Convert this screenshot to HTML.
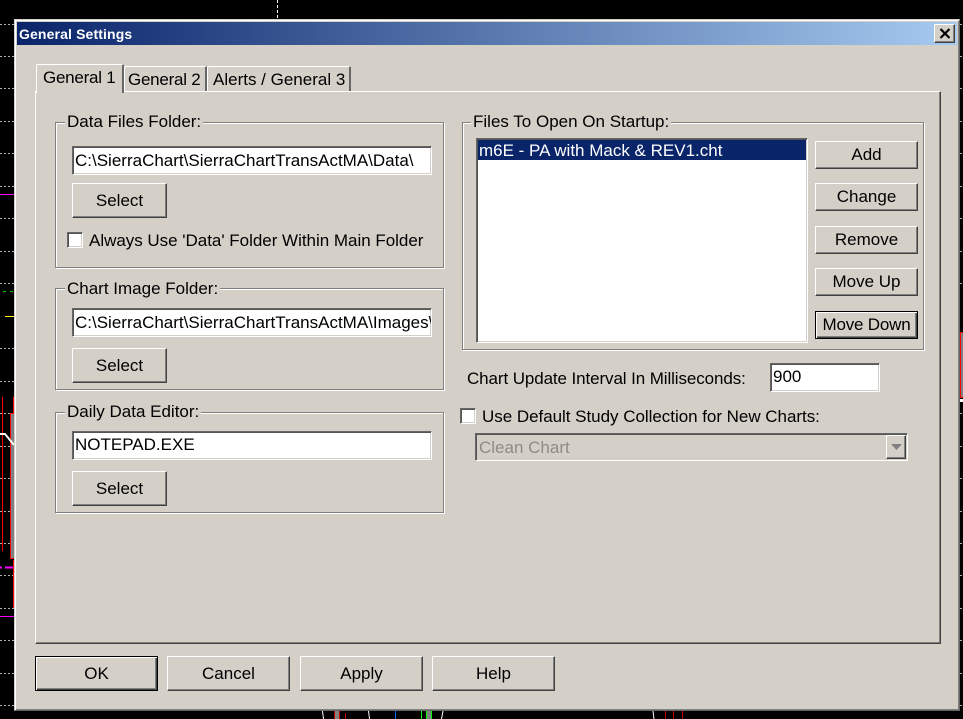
<!DOCTYPE html>
<html><head><meta charset="utf-8">
<style>
html,body{margin:0;padding:0;background:#000;width:963px;height:719px;overflow:hidden}
body{position:relative;font-family:"Liberation Sans",Arial,sans-serif;font-size:17px;color:#000}
div,span{position:absolute;box-sizing:border-box;white-space:pre}
.t{line-height:20px;height:20px}
.b{border:1px solid;border-color:#fff #404040 #404040 #fff;box-shadow:inset -1px -1px 0 #808080;background:#d4d0c8;text-align:center}
.d{border:1px solid #000;box-shadow:inset 1px 1px 0 #fff,inset -1px -1px 0 #404040,inset -2px -2px 0 #808080;background:#d4d0c8;text-align:center}
.e{background:#fff;border:1px solid;border-color:#666 #fff #fff #666;box-shadow:inset 1px 1px 0 #555,inset -1px -1px 0 #d4d0c8;padding-left:2px;overflow:hidden}
.g{border:1px solid #808080;box-shadow:1px 1px 0 #fff,inset 1px 1px 0 #fff}
.l{background:#d4d0c8;padding:0 2px 0 2px;line-height:20px;height:20px}
.c{background:#fff;border:1px solid;border-color:#666 #fff #fff #666;box-shadow:inset 1px 1px 0 #555,inset -1px -1px 0 #d4d0c8;width:16px;height:16px}
</style></head><body>
<svg width="963" height="719" style="position:absolute;left:0;top:0">
<g stroke="#b0b0b0" stroke-width="1" stroke-dasharray="2 2">
<path d="M0 24.5H14M0 56.5H14M0 88.5H14M0 121.5H14M0 153.5H14M0 186.5H14M0 218.5H14M0 251.5H14M0 283.5H14M0 348.5H14M0 381.5H14M0 413.5H14M0 446.5H14M0 478.5H14M0 511.5H14M0 543.5H14M0 575.5H14M0 608.5H14M0 640.5H14M0 673.5H14M0 705.5H14"/>
<path d="M960 24.5H963M960 56.5H963M960 88.5H963M960 121.5H963M960 153.5H963M960 186.5H963M960 218.5H963M960 251.5H963M960 283.5H963M960 413.5H963M960 446.5H963M960 478.5H963M960 511.5H963M960 543.5H963M960 575.5H963M960 608.5H963M960 640.5H963M960 673.5H963M960 705.5H963"/>
</g>
<path d="M277.5 0V18" stroke="#fff" stroke-dasharray="3 2"/>
<path d="M0 194.5H14M0 616.5H14" stroke="#f0f"/>
<path d="M0 567.5H2M5 567.5H14" stroke="#f0f" stroke-width="2"/>
<path d="M3 291.5H14" stroke="#0c0" stroke-dasharray="3 4"/>
<path d="M5 316.5H14" stroke="#ff0"/>
<path d="M2.5 397V551M13.5 397V414M13.5 560V608" stroke="#f00"/>
<rect x="10.500" y="413.500" width="4" height="145" fill="#808080" stroke="#f00"/>
<path d="M0 434H5L14 445" stroke="#fff" stroke-width="2" fill="none"/>
<rect x="960" y="332" width="3" height="66" fill="#808080"/>
<path d="M960 332.500H963M960.500 332V398M960 397.500H963" stroke="#f00"/>
<rect x="960" y="399" width="3" height="3" fill="#fff"/>
<g fill="none">
<path d="M322.500 711L323.500 719M368.500 711L369.500 719M443 711L441.500 719M653 711L654 719" stroke="#fff"/>
<rect x="335" y="711" width="5" height="8" fill="#808080" stroke="#f00" stroke-width="0"/>
<path d="M334.500 711V719M339.500 711V719M345.500 713V719M665.500 711V719M673.500 711V719M682.500 711V719" stroke="#c00"/>
<path d="M395.500 711V719" stroke="#06f"/>
<rect x="427" y="711" width="5" height="8" fill="#808080"/>
<path d="M421.500 711V719M426.500 711V719M431.500 711V719" stroke="#0f0"/>
</g>
</svg>

<!-- window -->
<div style="left:14px;top:19px;width:946px;height:692px;background:#d4d0c8;border:1px solid;border-color:#d4d0c8 #666 #666 #d4d0c8;box-shadow:inset 1px 1px 0 #fff,inset -1px -1px 0 #808080"></div>
<div style="left:17px;top:22px;width:940px;height:23px;background:linear-gradient(to right,#0a246a,#a6caf0)"></div>
<div style="left:19px;top:24px;height:20px;line-height:20px;color:#fff;font-weight:bold;font-size:14px;letter-spacing:.13px">General Settings</div>
<div class="b" style="left:934px;top:24px;width:21px;height:19px"></div>
<svg width="12" height="11" style="position:absolute;left:939px;top:28px"><path d="M1.500 1L10.500 10M10.500 1L1.500 10" stroke="#000" stroke-width="2.200"/></svg>

<!-- tab panel -->
<div style="left:35px;top:91px;width:906px;height:553px;border:1px solid;border-color:#fff #404040 #404040 #fff;box-shadow:inset -1px -1px 0 #808080"></div>
<div style="left:36px;top:64px;width:88px;height:29px;background:#d4d0c8;border-top:1px solid #fff;border-left:1px solid #fff;border-right:2px solid #666;border-radius:2px 2px 0 0"></div>
<div class="t" style="left:43px;top:68px;letter-spacing:-.25px">General 1</div>
<div style="left:124px;top:66px;width:83px;height:25px;border-top:1px solid #fff;border-left:1px solid #fff;border-right:2px solid #666;border-radius:2px 2px 0 0"></div>
<div class="t" style="left:128px;top:70px;letter-spacing:-.25px">General 2</div>
<div style="left:207px;top:66px;width:144px;height:25px;border-top:1px solid #fff;border-left:1px solid #fff;border-right:2px solid #666;border-radius:2px 2px 0 0"></div>
<div class="t" style="left:213px;top:70px">Alerts / General 3</div>

<!-- left groups -->
<div class="g" style="left:55px;top:122px;width:389px;height:146px"></div>
<div class="l" style="left:65px;top:112px">Data Files Folder:</div>
<div class="e t" style="left:72px;top:146px;width:360px;height:29px;line-height:28px">C:\SierraChart\SierraChartTransActMA\Data\</div>
<div class="b" style="left:72px;top:183px;width:95px;height:35px;line-height:34px">Select</div>
<div class="c" style="left:67px;top:232px"></div>
<div class="t" style="left:89px;top:231px;letter-spacing:-.02px">Always Use 'Data' Folder Within Main Folder</div>

<div class="g" style="left:55px;top:288px;width:389px;height:102px"></div>
<div class="l" style="left:65px;top:279px">Chart Image Folder:</div>
<div class="e t" style="left:72px;top:308px;width:360px;height:29px;line-height:28px">C:\SierraChart\SierraChartTransActMA\Images\</div>
<div class="b" style="left:72px;top:348px;width:95px;height:35px;line-height:34px">Select</div>

<div class="g" style="left:55px;top:412px;width:389px;height:101px"></div>
<div class="l" style="left:65px;top:402px">Daily Data Editor:</div>
<div class="e t" style="left:72px;top:431px;width:360px;height:29px;line-height:26px">NOTEPAD.EXE</div>
<div class="b" style="left:72px;top:471px;width:95px;height:35px;line-height:34px">Select</div>

<!-- right group -->
<div class="g" style="left:462px;top:122px;width:462px;height:228px"></div>
<div class="l" style="left:471px;top:112px">Files To Open On Startup:</div>
<div style="left:476px;top:138px;width:332px;height:205px;background:#fff;border:1px solid;border-color:#666 #fff #fff #666;box-shadow:inset 1px 1px 0 #555,inset -1px -1px 0 #d4d0c8"></div>
<div style="left:478px;top:140px;width:328px;height:20px;background:#0a246a;color:#fff;line-height:21px;padding-left:1px">m6E - PA with Mack &amp; REV1.cht</div>
<div class="b" style="left:815px;top:141px;width:103px;height:28px;line-height:26px">Add</div>
<div class="b" style="left:815px;top:183px;width:103px;height:28px;line-height:26px">Change</div>
<div class="b" style="left:815px;top:226px;width:103px;height:28px;line-height:26px">Remove</div>
<div class="b" style="left:815px;top:268px;width:103px;height:28px;line-height:26px">Move Up</div>
<div class="d" style="left:815px;top:311px;width:103px;height:28px;line-height:26px;letter-spacing:-.2px">Move Down</div>

<div class="t" style="left:467px;top:369px;letter-spacing:-.1px">Chart Update Interval In Milliseconds:</div>
<div class="e t" style="left:770px;top:363px;width:110px;height:29px;line-height:26px">900</div>
<div class="c" style="left:460px;top:408px"></div>
<div class="t" style="left:482px;top:407px;letter-spacing:-.03px">Use Default Study Collection for New Charts:</div>
<div style="left:475px;top:433px;width:433px;height:28px;background:#d4d0c8;border:1px solid;border-color:#666 #fff #fff #666;box-shadow:inset 1px 1px 0 #555,inset -1px -1px 0 #d4d0c8"></div>
<div class="t" style="left:479px;top:438px;color:#8f8b85">Clean Chart</div>
<div class="b" style="left:886px;top:435px;width:20px;height:24px"></div>
<svg width="11" height="7" style="position:absolute;left:891px;top:444px"><path d="M0 0H11L5.500 6Z" fill="#808080"/></svg>

<!-- bottom buttons -->
<div class="d" style="left:35px;top:656px;width:123px;height:35px;line-height:33px">OK</div>
<div class="b" style="left:167px;top:656px;width:123px;height:35px;line-height:33px">Cancel</div>
<div class="b" style="left:300px;top:656px;width:123px;height:35px;line-height:33px">Apply</div>
<div class="b" style="left:432px;top:656px;width:123px;height:35px;line-height:33px">Help</div>
</body></html>
